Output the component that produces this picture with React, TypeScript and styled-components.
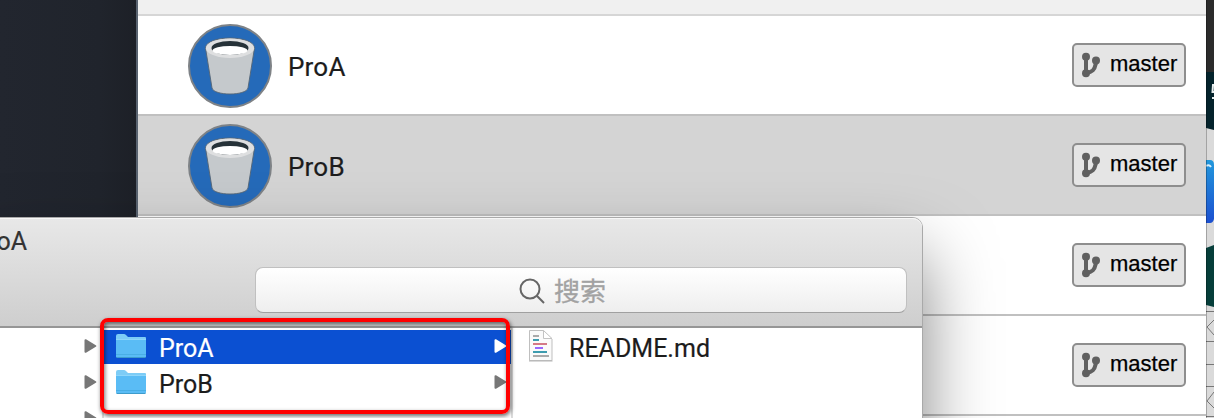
import React from "react";
import styled, { createGlobalStyle } from "styled-components";

const GlobalStyle = createGlobalStyle`
  * { box-sizing: border-box; }
  body { margin: 0; overflow: hidden; background: #dcdcdc; font-family: Roboto, "Noto Sans CJK SC", sans-serif; }
`;

const Screen = styled.main`
  position: relative;
  display: flex;
  width: 1214px;
  height: 418px;
  overflow: hidden;
`;

const Sidebar = styled.aside`
  flex: 0 0 138px;
  background: linear-gradient(90deg, #22262f 0, #20242c 100px, #1d2027 136px);
  border-right: 2px solid #596370;
`;

const RepoList = styled.section`
  flex: 0 0 1068px;
  background: #fff;
`;

const ListHeader = styled.div`
  height: 16px;
  background: #f0f0f0;
  border-bottom: 2px solid #d6d6d6;
`;

const RepoRow = styled.div<{ $selected?: boolean }>`
  display: flex;
  align-items: center;
  height: 100px;
  padding: 2px 20px 0 50px;
  background: ${(p) => (p.$selected ? "#d4d4d4" : "#fff")};
  border-bottom: 2px solid #c0c0c0;
`;

const RepoName = styled.span`
  margin: 2px 0 0 16px;
  font-size: 26px;
  line-height: 32px;
  letter-spacing: 0.2px;
  color: #1c1c1c;
  -webkit-text-stroke: 0.2px #1c1c1c;
`;

const Badge = styled.div`
  display: flex;
  width: 114px;
  height: 44px;
  margin: -2px 0 0 auto;
  padding-left: 7px;
  background: #e5e5e5;
  border: 2px solid #8e8e8e;
  border-radius: 5px;
  font: 22px/26px "Liberation Sans", sans-serif;
  color: #000;
`;

const BranchIcon = styled.svg`
  flex: none;
  margin: 7px 9px 0 0;
`;

const BranchLabel = styled.span`
  margin-top: 6px;
  -webkit-text-stroke: 0.25px #000;
`;

const Desktop = styled.svg`
  flex: none;
`;

const FinderWindow = styled.section`
  position: absolute;
  left: -20px;
  top: 218px;
  width: 942px;
  height: 420px;
  background: #fff;
  border-radius: 0 10px 10px 0;
  box-shadow: 0 0 0 1px #a9a9a9, 0 38px 70px rgba(0, 0, 0, 0.5);
`;

const TitleBar = styled.header`
  display: flex;
  flex-direction: column;
  height: 110px;
  padding: 8px 15px 0 20px;
  background: linear-gradient(#e8e8e8, #cecece);
  border-bottom: 2px solid #969696;
  border-radius: 0 9px 0 0;
  box-shadow: inset 0 1px 0 #f7f7f7;
`;

const WindowTitle = styled.div`
  height: 41px;
  margin-left: -28px;
  font-size: 25px;
  line-height: 32px;
  letter-spacing: 0.2px;
  color: #333;
  -webkit-text-stroke: 0.2px #333;
`;

const SearchField = styled.div`
  display: flex;
  align-items: center;
  align-self: flex-end;
  width: 652px;
  height: 46px;
  padding-left: 263px;
  gap: 9px;
  background: linear-gradient(#fff, #eee);
  border: 1px solid #c0c0c0;
  border-bottom-color: #a0a0a0;
  border-radius: 8px;
  font: 26px/32px "Noto Sans CJK SC", sans-serif;
  color: #a2a2a2;
  -webkit-text-stroke: 0.3px #a2a2a2;
`;

const SearchIcon = styled.svg`
  flex: none;
  margin-top: 2px;
`;

const Columns = styled.div`
  display: flex;
  height: 310px;
  padding-left: 20px;
`;

const Column = styled.div<{ $width: number; $divided?: boolean }>`
  flex: 0 0 ${(p) => p.$width}px;
  padding-top: 2px;
  border-right: ${(p) => (p.$divided ? "2px solid #dcdcdc" : "0")};
`;

const FileRow = styled.div<{ $selected?: boolean; $indent?: number }>`
  display: flex;
  align-items: center;
  height: 34px;
  margin-bottom: 2px;
  padding-left: ${(p) => p.$indent ?? 11}px;
  background: ${(p) => (p.$selected ? "#0b50d2" : "transparent")};
  color: ${(p) => (p.$selected ? "#fff" : "#1c1c1c")};
`;

const FileName = styled.span<{ $gap: number }>`
  margin: 3px 0 0 ${(p) => p.$gap}px;
  font-size: 25px;
  line-height: 32px;
  -webkit-text-stroke: 0.2px currentColor;
`;

const Arrow = styled.svg<{ $right: number }>`
  flex: none;
  margin: -2px ${(p) => p.$right}px 0 auto;
`;

const FolderIcon = styled.svg`
  flex: none;
  margin-top: -2px;
`;

const DocumentIcon = styled.svg`
  flex: none;
  margin-top: -2px;
`;

const Highlight = styled.div`
  position: absolute;
  left: 100px;
  top: 318px;
  width: 410px;
  height: 96px;
  border: 4px solid #f00;
  border-radius: 8px;
  box-shadow: 1px 2px 4px rgba(0, 0, 0, 0.6), inset 1px 2px 4px rgba(0, 0, 0, 0.55);
`;

const Bucket = () => (
  <svg width="84" height="84" viewBox="0 0 84 84">
    <circle cx="42" cy="42" r="41" fill="#256ab9" stroke="#7e8286" strokeWidth="2" />
    <path d="M17.5 24 L24 64 C26 72 58 72 60 64 L66.5 24 C66 10.7 18 10.7 17.5 24Z" fill="#c5c9cc" stroke="#536475" strokeWidth=".9" />
    <ellipse cx="42" cy="24.2" rx="24.1" ry="9.7" fill="#dedfe0" />
    <ellipse cx="42" cy="24" rx="18.5" ry="7" fill="#263238" />
    <ellipse cx="42" cy="26.4" rx="17.4" ry="4.5" fill="#fff" />
  </svg>
);

const Branch = () => (
  <BranchIcon width="20" height="26" viewBox="0 0 20 26" fill="none" stroke="#606060">
    <path d="M5 5V21" strokeWidth="4" />
    <path d="M14.7 9V12C13.5 18 11.5 20 5 21" strokeWidth="4" />
    <g fill="#606060" stroke="none">
      <circle cx="5" cy="4.8" r="4" />
      <circle cx="15" cy="8.5" r="4" />
      <circle cx="5" cy="21.2" r="4" />
    </g>
  </BranchIcon>
);

const Folder = () => (
  <FolderIcon width="32" height="26" viewBox="0 0 32 26">
    <path d="M1 3Q1 1 3 1H9Q10 1 11 2L13 4H30Q31 4 31 5V23Q31 24 30 24H2Q1 24 1 23Z" fill="#7dccf6" />
    <path d="M1 7H31V23Q31 24.5 29.5 24.5H2.5Q1 24.5 1 23Z" fill="#5abcf5" />
    <path d="M1 6.5H31" stroke="#8ed6fa" />
    <path d="M1 21.5H31" stroke="#49aee5" />
    <path d="M1.5 24.5H30.5" stroke="#3e9ccc" />
  </FolderIcon>
);

const Disclosure = ({ right, color = "#777" }: { right: number; color?: string }) => (
  <Arrow $right={right} width="13" height="14" viewBox="0 0 13 14">
    <path d="M1.5 1.2L11.3 7L1.5 12.8Z" fill={color} stroke={color} strokeWidth="2" strokeLinejoin="round" />
  </Arrow>
);

const Document = () => (
  <DocumentIcon width="26" height="34" viewBox="0 0 26 34">
    <path d="M1.5 1.5H15.5L24 10V31.5H1.5Z" fill="#fafafa" stroke="#bfbfbf" />
    <path d="M1 32H24.5" stroke="#b5b5b5" />
    <path d="M15.5 1.5V9.5H24Z" fill="#fff" stroke="#c3c3c3" />
    <g strokeWidth="2">
      <path d="M5 7H11M5 27H21" stroke="#aaa" />
      <path d="M5 11H11M5 23H19" stroke="#3d9caf" />
      <path d="M5 15H19" stroke="#d47987" />
      <path d="M7 19H15" stroke="#9868ff" />
    </g>
  </DocumentIcon>
);

const repositories: { name?: string; selected?: boolean }[] = [
  { name: "ProA" },
  { name: "ProB", selected: true },
  {},
  {},
];

export default function App() {
  return (
    <>
      <GlobalStyle />
      <Screen>
        <Sidebar />
        <RepoList>
          <ListHeader />
          {repositories.map((repo, i) => (
            <RepoRow key={i} $selected={repo.selected}>
              {repo.name && <><Bucket /><RepoName>{repo.name}</RepoName></>}
              <Badge><Branch /><BranchLabel>master</BranchLabel></Badge>
            </RepoRow>
          ))}
        </RepoList>
        <Desktop width="8" height="418" viewBox="0 0 8 418">
          <defs>
            <linearGradient id="app" x1="0" y1="0" x2="0" y2="1">
              <stop stopColor="#2298dc" /><stop offset="1" stopColor="#1b4fd0" />
            </linearGradient>
          </defs>
          <path d="M0 0H8V418H0Z" fill="#dadada" />
          <path d="M0 0H8V72H0Z" fill="#2b2b2b" />
          <path d="M0 72H8V130L0 128Z" fill="#04232c" />
          <path d="M8 85H7L6.5 92H8M6 98H8" fill="none" stroke="#e8eeee" strokeWidth="2" />
          <path d="M0 160H4Q8 160 8 165V219Q7 223 4 223H0Z" fill="url(#app)" />
          <path d="M0 166Q3 164 5 167" fill="none" stroke="#d7eefa" strokeWidth="2" />
          <path d="M0 248L8 245V307L0 305Z" fill="#063e3a" />
          <path d="M0 311.5H8M0 341.5H8M0 364.5H8M0 386.5H8M0 416.5H8" stroke="#777" />
          <path d="M8 320L1 327L8 335M8 392L1 401L8 408" fill="none" stroke="#777" />
          <path d="M.5 0V418" stroke="#000" strokeOpacity=".25" />
        </Desktop>
        <FinderWindow>
          <TitleBar>
            <WindowTitle>ProA</WindowTitle>
            <SearchField>
              <SearchIcon width="26" height="26" viewBox="0 0 26 26" fill="none" stroke="#666" strokeWidth="2">
                <circle cx="11" cy="11" r="9.5" /><path d="M17.8 17.8L25 25" />
              </SearchIcon>
              搜索
            </SearchField>
          </TitleBar>
          <Columns>
            <Column $width={104} $divided>
              <FileRow><Disclosure right={5} /></FileRow>
              <FileRow><Disclosure right={5} /></FileRow>
              <FileRow><Disclosure right={5} /></FileRow>
            </Column>
            <Column $width={409} $divided>
              <FileRow $selected><Folder /><FileName $gap={12}>ProA</FileName><Disclosure right={4} color="#fff" /></FileRow>
              <FileRow><Folder /><FileName $gap={12}>ProB</FileName><Disclosure right={4} /></FileRow>
            </Column>
            <Column $width={409}>
              <FileRow $indent={15}><Document /><FileName $gap={15}>README.md</FileName></FileRow>
            </Column>
          </Columns>
        </FinderWindow>
        <Highlight />
      </Screen>
    </>
  );
}
